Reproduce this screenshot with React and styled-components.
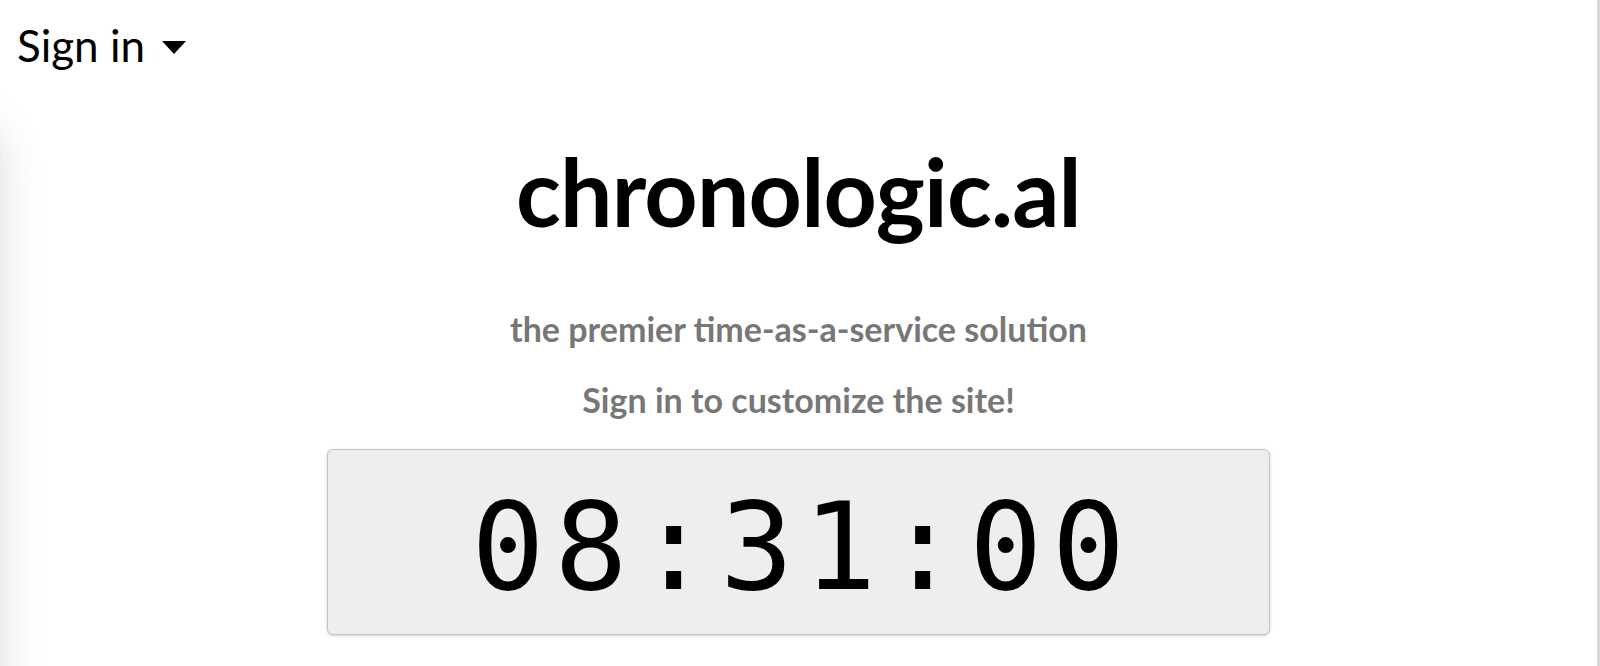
import React from 'react'
import styled, { createGlobalStyle } from 'styled-components'

const GlobalStyle = createGlobalStyle`
    html, body {
        margin: 0;
        padding: 0;
        background: #fff;
        overflow: hidden;
    }
    body {
        font-family: Lato, "Noto Sans", sans-serif;
        color: #000;
    }
`

const Page = styled.div`
    min-height: 100vh;
    box-sizing: border-box;
    border-right: 3px solid #d6d6d6;
`

// side drawer parked off screen, only its shadow shows at the left edge
const Drawer = styled.aside`
    position: fixed;
    left: -299px;
    top: 125px;
    width: 300px;
    height: 900px;
    background: #ececec;
    border-radius: 30px;
    box-shadow: 0 0 45px rgba(0, 0, 0, 0.13);
`

const Header = styled.header`
    padding: 19px 17px 0;
    height: 70px;
    box-sizing: border-box;
`

const SignIn = styled.button`
    display: inline-flex;
    align-items: center;
    gap: 17px;
    border: 0;
    background: none;
    padding: 0;
    font-family: Lato, "Noto Sans", sans-serif;
    font-size: 44px;
    line-height: 1.2;
    color: #000;
    cursor: pointer;
`

const Caret = styled.span`
    width: 0;
    height: 0;
    margin-top: 4px;
    border-left: 12px solid transparent;
    border-right: 12px solid transparent;
    border-top: 13px solid #000;
`

const Main = styled.main`
    display: flex;
    flex-direction: column;
    align-items: center;
    text-align: center;
`

const Title = styled.h1`
    margin: 66px 0 0;
    font-size: 93px;
    font-weight: 700;
    line-height: 1.2;
    letter-spacing: -0.8px;
`

const Tagline = styled.p`
    margin: ${props => props.first ? '61px' : '31px'} 0 0;
    font-size: 34px;
    font-weight: 700;
    line-height: 40px;
    color: #777;
`

const Clock = styled.div`
    margin-top: 29px;
    width: 943px;
    height: 186px;
    box-sizing: border-box;
    padding: 26px 0 0 9px;
    background: #eee;
    border: 1px solid #c4c4c4;
    border-radius: 6px;
    box-shadow: 0 1px 3px rgba(0, 0, 0, 0.18);
    font-family: "DejaVu Sans Mono", monospace;
    font-size: 122px;
    letter-spacing: 9.5px;
    line-height: 1.17;
    color: #000;
`

const App = () => {
    return (
        <Page>
            <GlobalStyle />
            <Drawer />
            <Header>
                <SignIn>
                    Sign in
                    <Caret />
                </SignIn>
            </Header>
            <Main>
                <Title>chronologic.al</Title>
                <Tagline first>the premier time-as-a-service solution</Tagline>
                <Tagline>Sign in to customize the site!</Tagline>
                <Clock>08:31:00</Clock>
            </Main>
        </Page>
    )
}

export default App
